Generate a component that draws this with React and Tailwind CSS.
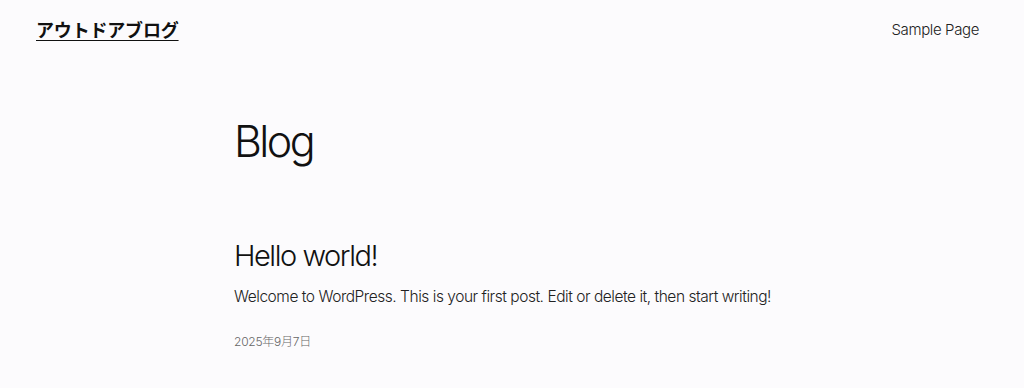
import React from 'react';

const font = { fontFamily: 'Inter, "Noto Sans CJK JP", sans-serif' };

function Header() {
    return (
        <header className="flex items-center justify-between h-[60px] px-9">
            <a className="text-[18px] font-bold text-[#111] underline underline-offset-[3px] decoration-1 tracking-[-0.01em]" href="#">
                アウトドアブログ
            </a>
            <nav className="text-[15px] font-light text-[#222] tracking-[-0.025em] pr-[9px]">Sample Page</nav>
        </header>
    );
}

export default function App() {
    return (
        <div className="w-[1024px] h-[388px] bg-[#fcfbfd] overflow-hidden" style={font}>
            <Header />
            <main className="pl-[234px]">
                <h1 className="mt-[60px] text-[43px] leading-none font-light text-[#111] tracking-[-0.06em]">Blog</h1>
                <h2 className="mt-[78px] text-[29px] leading-none font-light text-[#111] tracking-[-0.05em]">Hello world!</h2>
                <p className="mt-[15px] text-[15.5px] font-light text-[#222] tracking-[-0.03em]">
                    Welcome to WordPress. This is your first post. Edit or delete it, then start writing!
                </p>
                <div className="mt-[25px] text-[12px] font-light text-[#666] tracking-[-0.02em]">2025年9月7日</div>
            </main>
        </div>
    );
}
